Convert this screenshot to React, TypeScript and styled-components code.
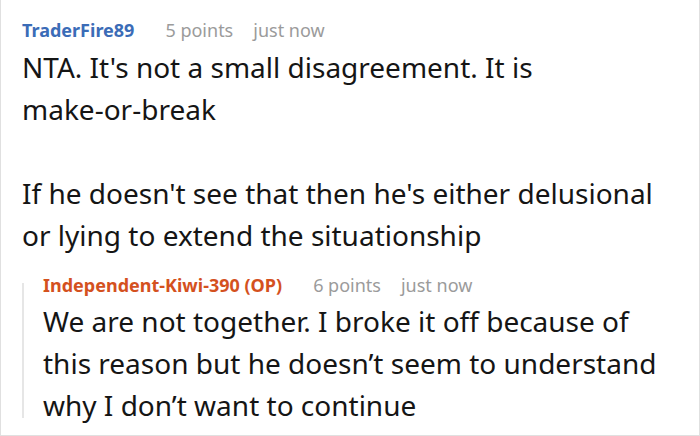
import styled, {createGlobalStyle} from 'styled-components';

const GlobalStyle = createGlobalStyle`
  html, body {
    margin: 0;
    padding: 0;
    background: #fff;
  }
  body {
    font-family: 'Noto Sans', 'Open Sans', sans-serif;
  }
`;

const Frame = styled.div`
  box-sizing: border-box;
  width: 700px;
  height: 436px;
  border: 1px solid #e0e0e0;
  border-top: none;
  padding: 15px 30px 0 21px;
  overflow: hidden;
`;

const Comment = styled.div`
  display: flex;
  flex-direction: column;
`;

const Meta = styled.div`
  display: flex;
  align-items: baseline;
  gap: 20px;
  font-size: 18px;
  line-height: 30px;
`;

const Author = styled.span<{$op?: boolean}>`
  font-weight: 700;
  margin-right: 11px;
  color: ${p => (p.$op ? '#d4511e' : '#3b6cb7')};
`;

const Muted = styled.span`
  color: #9b9b9b;
`;

const Body = styled.div`
  font-size: 28px;
  line-height: 42px;
  color: #151515;
  margin-top: 1px;

  p {
    margin: 0;
  }
`;

const NoBreak = styled.span`
  white-space: nowrap;
`;

const Reply = styled.div`
  position: relative;
  margin-top: 14px;
  padding-left: 21px;

  &::before {
    content: '';
    position: absolute;
    left: 0;
    top: 13px;
    bottom: 8px;
    width: 2px;
    background: #e6e6e6;
  }

  ${Body} {
    margin-top: 0;
  }
`;

export default function App() {
  return (
    <>
      <GlobalStyle />
      <Frame>
        <Comment>
          <Meta>
            <Author>TraderFire89</Author>
            <Muted>5 points</Muted>
            <Muted>just now</Muted>
          </Meta>
          <Body>
            <p>
              NTA. It's not a small disagreement. It is <NoBreak>make-or-break</NoBreak>
            </p>
            <p>&nbsp;</p>
            <p>If he doesn't see that then he's either delusional or lying to extend the situationship</p>
          </Body>
          <Reply>
            <Meta>
              <Author $op>Independent-Kiwi-390 (OP)</Author>
              <Muted>6 points</Muted>
              <Muted>just now</Muted>
            </Meta>
            <Body>
              <p>We are not together. I broke it off because of this reason but he doesn’t seem to understand why I don’t want to continue</p>
            </Body>
          </Reply>
        </Comment>
      </Frame>
    </>
  );
}
